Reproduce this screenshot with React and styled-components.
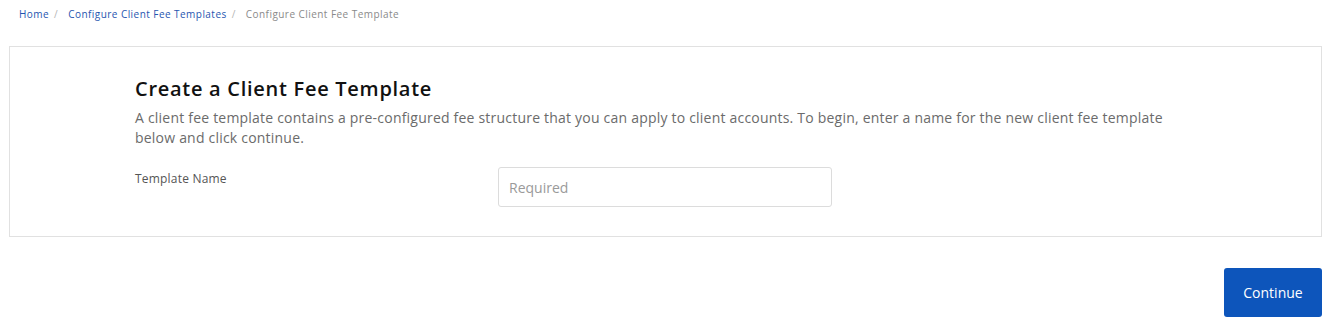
import React from "react";
import styled, { createGlobalStyle } from "styled-components";

const Global = createGlobalStyle`
  html, body { margin: 0; padding: 0; background: #fff; }
  body { font-family: "Open Sans", "Noto Sans", sans-serif; color: #1a1a1a; }
  * { box-sizing: border-box; }
`;

const Page = styled.div`
  padding: 6px 7px 0 9px;
  width: 1329px;
`;

const Crumbs = styled.nav`
  display: flex;
  align-items: center;
  height: 16px;
  padding-left: 10px;
  font-size: 10px;
  letter-spacing: 0.45px;
  gap: 5px;
`;

const Crumb = styled.a`
  color: ${(p) => (p.$current ? "#8a8a8a" : "#1f55b0")};
  text-decoration: none;
`;

const Sep = styled.span`
  color: #b5b5b5;
  margin-right: 5px;
`;

const Card = styled.section`
  margin-top: 24px;
  border: 1px solid #e1e1e1;
  height: 191px;
  padding: 30px 0 0 125px;
`;

const Content = styled.div`
  width: 1060px;
`;

const Title = styled.h1`
  margin: 0;
  font-size: 20px;
  font-weight: 600;
  letter-spacing: 0.72px;
  color: #111;
  line-height: 24px;
`;

const Desc = styled.p`
  margin: 7px 0 0;
  font-size: 14px;
  line-height: 20px;
  letter-spacing: 0.21px;
  color: #6b6b6b;
`;

const FieldRow = styled.div`
  display: grid;
  grid-template-columns: 363px 334px;
  margin-top: 17px;
`;

const Label = styled.label`
  font-size: 12px;
  letter-spacing: 0.2px;
  color: #555;
  padding-top: 5px;
`;

const Input = styled.input`
  margin-top: 2px;
  height: 40px;
  border: 1px solid #dcdcdc;
  border-radius: 3px;
  padding: 0 10px;
  font-size: 14px;
  font-family: inherit;
  &::placeholder { color: #9a9a9a; }
`;

const Footer = styled.div`
  display: flex;
  justify-content: flex-end;
  margin-top: 31px;
`;

const Button = styled.button`
  width: 98px;
  height: 49px;
  background: #0d55bb;
  color: #fff;
  border: none;
  border-radius: 3px;
  font-size: 14px;
  font-family: inherit;
`;

export default function App() {
  return (
    <>
      <Global />
      <Page>
        <Crumbs>
          <Crumb href="#">Home</Crumb>
          <Sep>/</Sep>
          <Crumb href="#">Configure Client Fee Templates</Crumb>
          <Sep>/</Sep>
          <Crumb $current>Configure Client Fee Template</Crumb>
        </Crumbs>
        <Card>
          <Content>
            <Title>Create a Client Fee Template</Title>
            <Desc>
              A client fee template contains a pre-configured fee structure that you can apply to client accounts. To begin, enter a name for the new client fee template below and click continue.
            </Desc>
            <FieldRow>
              <Label>Template Name</Label>
              <Input placeholder="Required" />
            </FieldRow>
          </Content>
        </Card>
        <Footer>
          <Button>Continue</Button>
        </Footer>
      </Page>
    </>
  );
}
